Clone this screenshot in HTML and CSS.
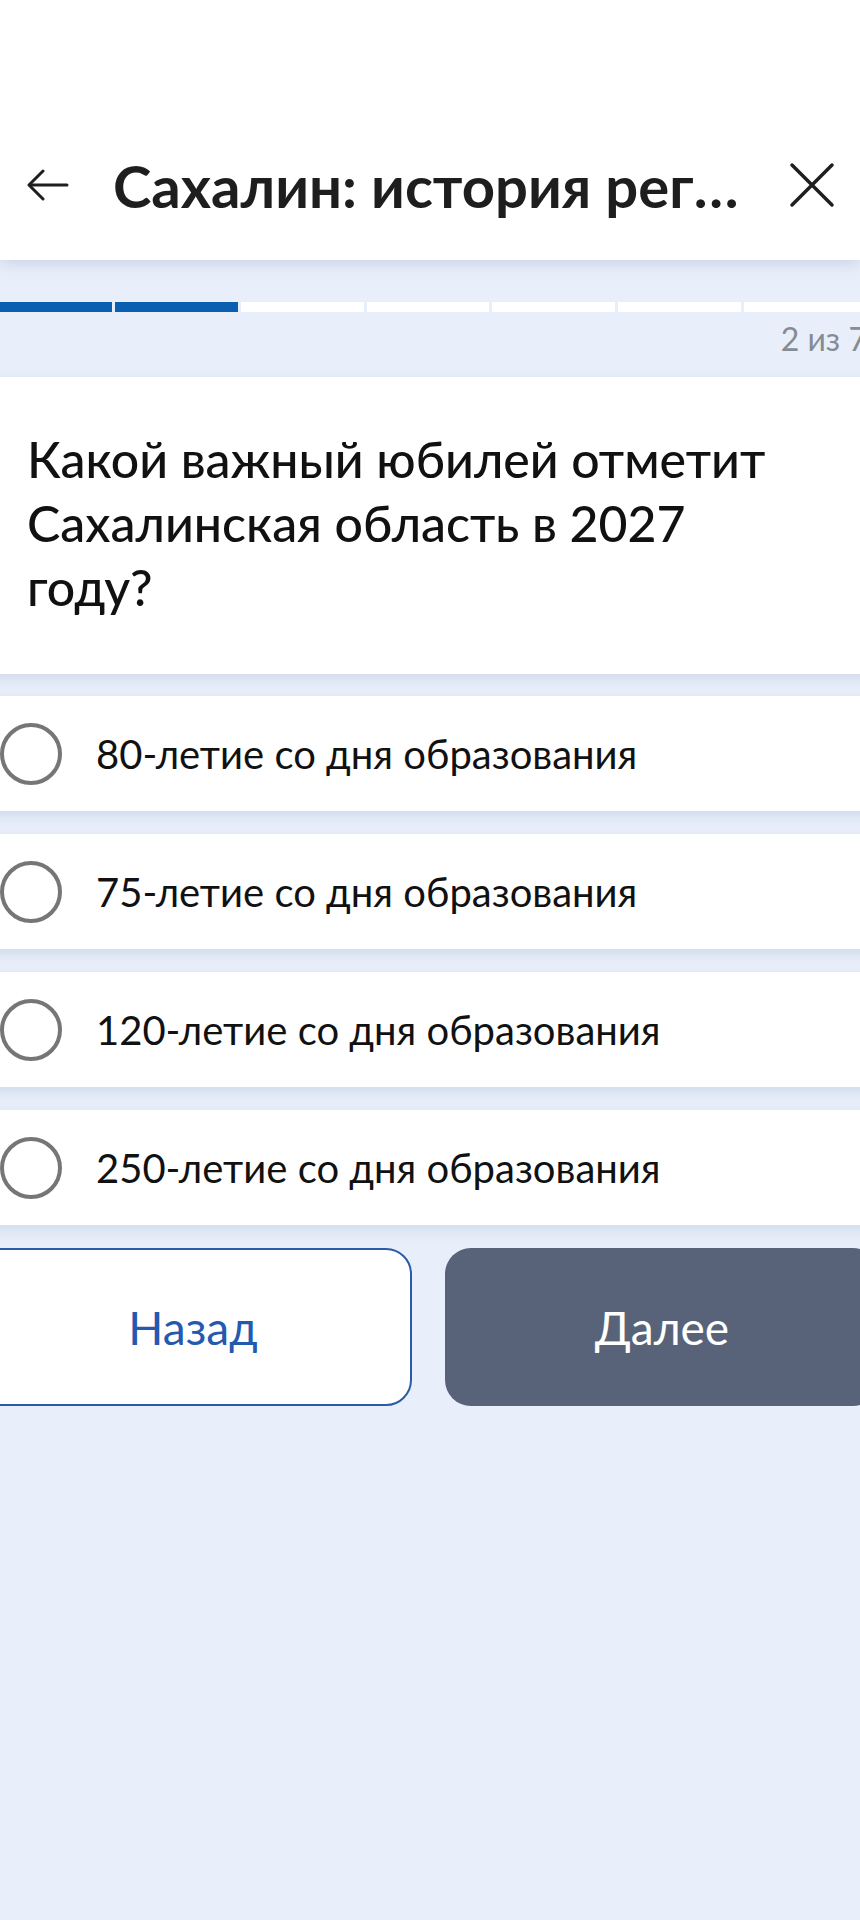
FILE: index.html
```html
<!DOCTYPE html>
<html lang="ru">
<head>
    <meta charset="UTF-8">
    <meta name="viewport" content="width=device-width, initial-scale=1.0">
    <title>Сахалин: история региона</title>
    <link rel="stylesheet" href="styles.css">
</head>
<body>
    <header class="topbar">
        <button class="icon-btn back" aria-label="Назад">
            <svg width="42" height="32" viewBox="0 0 42 32" fill="none" stroke="#1f1f1f" stroke-width="3" stroke-linecap="round" stroke-linejoin="round">
                <path d="M40 16H3"/>
                <path d="M16 2L2 16l14 14"/>
            </svg>
        </button>
        <h1 class="title">Сахалин: история региона</h1>
        <button class="icon-btn close" aria-label="Закрыть">
            <svg width="46" height="46" viewBox="0 0 46 46" fill="none" stroke="#1f1f1f" stroke-width="3.5" stroke-linecap="round">
                <path d="M3 3l40 40M43 3L3 43"/>
            </svg>
        </button>
    </header>

    <main class="quiz">
        <div class="progress">
            <div class="steps">
                <span class="step done"></span>
                <span class="step done"></span>
                <span class="step"></span>
                <span class="step"></span>
                <span class="step"></span>
                <span class="step"></span>
                <span class="step"></span>
            </div>
            <div class="counter">2 из 7</div>
        </div>

        <section class="question">
            <h2>Какой важный юбилей отметит Сахалинская область в 2027 году?</h2>
        </section>

        <ul class="answers">
            <li class="answer"><span class="radio"></span><span>80-летие со дня образования</span></li>
            <li class="answer"><span class="radio"></span><span>75-летие со дня образования</span></li>
            <li class="answer"><span class="radio"></span><span>120-летие со дня образования</span></li>
            <li class="answer"><span class="radio"></span><span>250-летие со дня образования</span></li>
        </ul>

        <div class="actions">
            <button class="btn btn-outline">Назад</button>
            <button class="btn btn-primary" disabled>Далее</button>
        </div>
    </main>
</body>
</html>
```

FILE: styles.css
```css
html, body {
    margin: 0;
    padding: 0;
    overflow-x: hidden;
}
body {
    min-height: 1920px;
    background-color: #e9effa;
    font-family: Lato, "Noto Sans", sans-serif;
    color: #111;
}

/* top bar */
.topbar {
    height: 150px;
    padding: 110px 25px 0 27px;
    background: #fff;
    display: flex;
    align-items: center;
    box-shadow: 0 4px 14px rgba(60, 90, 150, 0.18);
    position: relative;
    z-index: 2;
}
.icon-btn {
    background: none;
    border: none;
    padding: 0;
    display: flex;
    cursor: pointer;
}
.title {
    margin: 0 0 0 44px;
    width: 632px;
    font-size: 58px;
    font-weight: 700;
    color: #1e1e1e;
    white-space: nowrap;
    overflow: hidden;
    text-overflow: ellipsis;
}
.close {
    margin-left: auto;
}

/* content is a bit wider than the window */
.quiz {
    width: 905px;
    margin-left: -26px;
}

.progress {
    padding: 42px 12px 0 15px;
    height: 75px;
}
.steps {
    display: flex;
    gap: 3px;
}
.step {
    flex: 1;
    height: 10px;
    background: #fff;
}
.step.done {
    background: #0b5fb0;
}
.counter {
    margin-top: 7px;
    text-align: right;
    font-size: 32px;
    color: #868b95;
}

.question {
    background: #fff;
    padding: 50px 60px 55px 53px;
    box-shadow: 0 5px 12px rgba(60, 90, 150, 0.14);
}
.question h2 {
    margin: 0;
    font-size: 50px;
    font-weight: 500;
    line-height: 64px;
    color: #111;
}

.answers {
    list-style: none;
    margin: 22px 0 0;
    padding: 0;
    display: flex;
    flex-direction: column;
    gap: 23px;
}
.answer {
    height: 115px;
    background: #fff;
    display: flex;
    align-items: center;
    gap: 34px;
    padding-left: 26px;
    font-size: 40px;
    color: #111;
    box-shadow: 0 5px 12px rgba(60, 90, 150, 0.14);
}
.radio {
    width: 54px;
    height: 54px;
    border: 4px solid #767676;
    border-radius: 50%;
    flex-shrink: 0;
}

.actions {
    display: flex;
    gap: 33px;
    margin-top: 23px;
}
.btn {
    flex: 1;
    height: 158px;
    border-radius: 26px;
    font-family: Lato, "Noto Sans", sans-serif;
    font-size: 46px;
    cursor: pointer;
}
.btn-outline {
    background: #fff;
    border: 2px solid #2a5ba6;
    color: #2459b0;
}
.btn-primary {
    background: #586379;
    border: none;
    color: #fff;
}
```
